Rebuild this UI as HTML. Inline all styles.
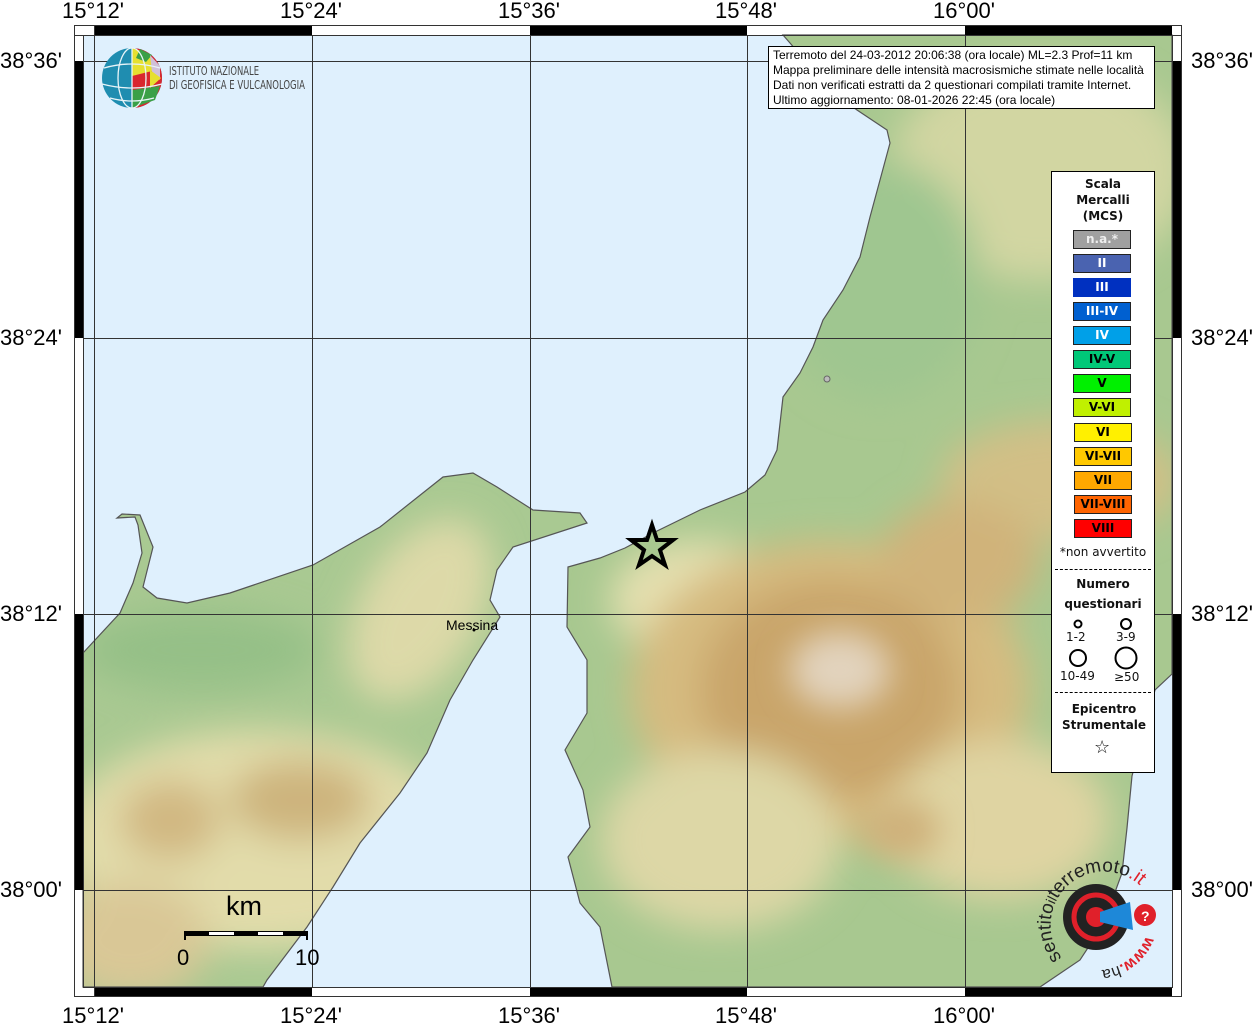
<!DOCTYPE html>
<html><head><meta charset="utf-8"><style>
html,body{margin:0;padding:0;background:#fff;}
body{width:1255px;height:1024px;position:relative;overflow:hidden;font-family:"Liberation Sans","DejaVu Sans",sans-serif;}
.ax{position:absolute;font-size:22px;color:#000;line-height:22px;}
</style></head><body>
<svg width="1255" height="1024" style="position:absolute;left:0;top:0" xmlns="http://www.w3.org/2000/svg">
<defs>
<clipPath id="mapc"><rect x="83" y="35" width="1089" height="952"/></clipPath>
<clipPath id="sic"><path id="sicp" d="M83,653 L120,613 L133,583 L142,553 L138,525 L135,517 L117,518 L122,514 L140,515 L153,547 L143,587 L157,598 L187,603 L230,593 L313,565 L380,527 L443,477 L473,473 L497,487 L533,510 L580,513 L587,523 L513,547 L497,570 L490,600 L500,617 L473,660 L450,700 L427,753 L400,793 L360,843 L333,887 L307,927 L267,980 L263,987 L83,987 Z"/></clipPath>
<clipPath id="cal"><path id="calp" d="M783,35 L790,43 L830,90 L857,110 L887,130 L890,143 L880,180 L870,217 L860,257 L843,290 L823,320 L813,347 L800,373 L783,397 L777,450 L765,475 L745,492 L700,510 L655,532 L625,548 L600,558 L568,567 L567,627 L587,660 L587,713 L565,750 L583,790 L590,827 L568,857 L580,903 L600,927 L612,987 L1040,987 L1080,960 L1103,925 L1122,873 L1127,828 L1132,776 L1155,690 L1172,674 L1172,35 Z"/></clipPath>
<filter id="bl" x="-50%" y="-50%" width="200%" height="200%"><feGaussianBlur stdDeviation="18"/></filter>
<filter id="bl2" x="-50%" y="-50%" width="200%" height="200%"><feGaussianBlur stdDeviation="16"/></filter>
</defs>
<rect x="83" y="35" width="1089" height="952" fill="#dff0fd"/>
<g clip-path="url(#sic)">
<rect x="83" y="460" width="520" height="530" fill="#a9c992"/>
<g filter="url(#bl)">
<ellipse cx="260" cy="840" rx="200" ry="110" fill="#e2dcaa"/>
<ellipse cx="130" cy="940" rx="80" ry="60" fill="#d9c796"/>
<ellipse cx="420" cy="610" rx="60" ry="100" fill="#ddd9a8" transform="rotate(30 420 610)"/>
<ellipse cx="300" cy="800" rx="70" ry="40" fill="#cdb47d"/>
<ellipse cx="170" cy="820" rx="50" ry="40" fill="#d1b882"/>
<ellipse cx="200" cy="650" rx="120" ry="40" fill="#95c087"/>
</g>
</g>
<g clip-path="url(#cal)">
<rect x="560" y="35" width="620" height="960" fill="#a8c890"/>
<g filter="url(#bl)">
<ellipse cx="1040" cy="170" rx="150" ry="110" fill="#d2d6a2"/>
<ellipse cx="1060" cy="480" rx="120" ry="60" fill="#d2bf86"/>
<ellipse cx="700" cy="600" rx="90" ry="60" fill="#e5e0b0"/>
<ellipse cx="830" cy="690" rx="200" ry="150" fill="#d6bb80"/>
<ellipse cx="830" cy="690" rx="130" ry="110" fill="#c9a56a"/>
<ellipse cx="1000" cy="820" rx="110" ry="80" fill="#dfd4a2"/>
<ellipse cx="720" cy="840" rx="120" ry="90" fill="#ddd7a6"/>
<ellipse cx="960" cy="560" rx="80" ry="60" fill="#d0b37a"/>
<ellipse cx="880" cy="280" rx="100" ry="120" fill="#9fc690"/>
</g>
<g filter="url(#bl2)">
<ellipse cx="840" cy="670" rx="50" ry="38" fill="#e2d3bd"/>
<ellipse cx="900" cy="830" rx="40" ry="30" fill="#cfb17a"/>
</g>
</g>
<use href="#sicp" fill="none" stroke="#555" stroke-width="1.2"/>
<use href="#calp" fill="none" stroke="#555" stroke-width="1.2"/>
<circle cx="827" cy="379" r="3" fill="#bbb" stroke="#666"/>
<g stroke="#333" stroke-width="1" clip-path="url(#mapc)">
<line x1="94.5" y1="35" x2="94.5" y2="987"/><line x1="312.5" y1="35" x2="312.5" y2="987"/><line x1="530.5" y1="35" x2="530.5" y2="987"/><line x1="747.5" y1="35" x2="747.5" y2="987"/><line x1="965.5" y1="35" x2="965.5" y2="987"/>
<line x1="74" y1="61.5" x2="1182" y2="61.5"/><line x1="74" y1="338.5" x2="1182" y2="338.5"/><line x1="74" y1="614.5" x2="1182" y2="614.5"/><line x1="74" y1="890.5" x2="1182" y2="890.5"/>
</g>
<rect x="74.5" y="25.5" width="1107" height="971" fill="none" stroke="#333"/>
<rect x="83.5" y="35.5" width="1089" height="952" fill="none" stroke="#333"/>
<g fill="#000">
<rect x="94" y="26" width="218" height="9"/><rect x="530" y="26" width="217" height="9"/><rect x="965" y="26" width="207" height="9"/>
<rect x="94" y="988" width="218" height="8"/><rect x="530" y="988" width="217" height="8"/><rect x="965" y="988" width="207" height="8"/>
<rect x="75" y="61" width="8" height="277"/><rect x="75" y="614" width="8" height="276"/>
<rect x="1173" y="61" width="8" height="277"/><rect x="1173" y="614" width="8" height="276"/>
</g>
<g stroke="#333"><line x1="94.5" y1="26" x2="94.5" y2="35"/><line x1="94.5" y1="987" x2="94.5" y2="996"/><line x1="75" y1="35.5" x2="83" y2="35.5"/><line x1="1172" y1="35.5" x2="1181" y2="35.5"/></g>
<polygon points="652,525 657,540 673,540 660,550 665,565 652,556 639,565 644,550 631,540 647,540" fill="#a8c890" stroke="#000" stroke-width="4" stroke-linejoin="miter"/>
<text x="446" y="630" font-size="14" font-family="Liberation Sans,sans-serif">Messina</text>
<circle cx="474" cy="630" r="1.5" fill="#000"/>
<text x="226" y="915" font-size="27" font-family="Liberation Sans,sans-serif">km</text>
<rect x="184" y="931" width="124" height="5" fill="#000"/>
<rect x="209" y="932" width="25" height="3" fill="#fff"/><rect x="258" y="932" width="25" height="3" fill="#fff"/>
<line x1="185" y1="931" x2="185" y2="940" stroke="#000" stroke-width="2"/><line x1="307" y1="931" x2="307" y2="940" stroke="#000" stroke-width="2"/>
<text x="177" y="965" font-size="22" font-family="Liberation Sans,sans-serif">0</text>
<text x="295" y="965" font-size="22" font-family="Liberation Sans,sans-serif">10</text>
<g>
<circle cx="132" cy="78" r="30" fill="#1f8db0"/>
<path d="M132,48 A30,30 0 0 1 162,78 A30,30 0 0 1 132,108 Z" fill="#d9262e"/>
<path d="M132,48 L150,54 L156,70 L132,76 Z" fill="#e6e030"/>
<path d="M140,49 L152,55 L146,62 L136,58 Z" fill="#3aa047"/>
<path d="M150,55 L160,66 L160,80 L152,72 Z" fill="#d0c0d8"/>
<path d="M132,90 L160,86 L155,100 L132,108 Z" fill="#3aa047"/>
<path d="M150,70 L161,78 L150,88 Z" fill="#e6e030"/>
<g fill="none" stroke="#e8f4f8" stroke-width="1.3"><ellipse cx="132" cy="78" rx="14" ry="30"/><line x1="132" y1="48" x2="132" y2="108"/><path d="M104,68 Q132,60 160,68"/><path d="M102,84 Q132,92 162,84"/><path d="M110,98 Q132,104 154,98"/></g>
</g>
<text x="169" y="75" font-size="12" fill="#444" font-family="DejaVu Sans Condensed,Liberation Sans Narrow,sans-serif" textLength="90" lengthAdjust="spacingAndGlyphs">ISTITUTO NAZIONALE</text>
<text x="169" y="89" font-size="12" fill="#444" font-family="DejaVu Sans Condensed,Liberation Sans Narrow,sans-serif" textLength="136" lengthAdjust="spacingAndGlyphs">DI GEOFISICA E VULCANOLOGIA</text>
<g>
<circle cx="1096" cy="917" r="33" fill="#222"/>
<circle cx="1096" cy="917" r="22" fill="none" stroke="#e0202a" stroke-width="5"/>
<circle cx="1096" cy="917" r="10" fill="#e0202a"/>
<path d="M1100,912 L1130,902 L1133,930 L1100,922 Z" fill="#1e88d8"/>
<circle cx="1145" cy="915" r="11" fill="#e0202a"/>
<text x="1141" y="921" font-size="14" font-weight="bold" fill="#fff">?</text>
<path id="arc1" d="M1062,958 A42,42 0 0 1 1146,892" fill="none"/>
<text font-size="19" font-family="Liberation Sans,sans-serif" fill="#222"><textPath href="#arc1">sentito<tspan font-size="14">il</tspan>terremoto<tspan fill="#e0202a">.it</tspan></textPath></text>
<path id="arc2" d="M1146,936 A52,52 0 0 1 1100,970" fill="none"/>
<text font-size="16" font-family="Liberation Sans,sans-serif" fill="#e0202a" font-weight="bold" transform="rotate(0)"><textPath href="#arc2">www.<tspan fill="#222" font-weight="normal">hai</tspan></textPath></text>
</g>
</svg>
<div class="ax" style="left:62px;top:0">15°12'</div>
<div class="ax" style="left:280px;top:0">15°24'</div>
<div class="ax" style="left:498px;top:0">15°36'</div>
<div class="ax" style="left:715px;top:0">15°48'</div>
<div class="ax" style="left:933px;top:0">16°00'</div>
<div class="ax" style="left:62px;top:1005px">15°12'</div>
<div class="ax" style="left:280px;top:1005px">15°24'</div>
<div class="ax" style="left:498px;top:1005px">15°36'</div>
<div class="ax" style="left:715px;top:1005px">15°48'</div>
<div class="ax" style="left:933px;top:1005px">16°00'</div>
<div class="ax" style="left:0;top:50px">38°36'</div>
<div class="ax" style="left:0;top:327px">38°24'</div>
<div class="ax" style="left:0;top:603px">38°12'</div>
<div class="ax" style="left:0;top:879px">38°00'</div>
<div class="ax" style="left:1191px;top:50px">38°36'</div>
<div class="ax" style="left:1191px;top:327px">38°24'</div>
<div class="ax" style="left:1191px;top:603px">38°12'</div>
<div class="ax" style="left:1191px;top:879px">38°00'</div>
<div style="position:absolute;left:768px;top:46px;background:#fff;border:1px solid #000;font-size:12px;line-height:15px;padding:1px 0 0 4px;box-sizing:border-box;white-space:nowrap;overflow:hidden;width:387px;height:63px">Terremoto del 24-03-2012 20:06:38 (ora locale) ML=2.3 Prof=11 km<br>Mappa preliminare delle intensità macrosismiche stimate nelle località<br>Dati non verificati estratti da 2 questionari compilati tramite Internet.<br>Ultimo aggiornamento: 08-01-2026 22:45 (ora locale)</div>
<div style="position:absolute;left:1051px;top:171px;width:104px;height:602px;background:#fff;border:1px solid #000;box-sizing:border-box;font-family:'DejaVu Sans',sans-serif;color:#111;">
<div style="text-align:center;font-weight:bold;font-size:12px;line-height:16px;margin-top:4px">Scala<br>Mercalli<br>(MCS)</div>
<div style="position:absolute;left:0;top:58px;width:102px;font-weight:bold;font-size:12px;">
<div style="position:absolute;left:21px;top:0;width:56px;height:17px;border:1px solid #222;background:#a0a0a0;color:#eee;text-align:center;line-height:17px">n.a.*</div>
<div style="position:absolute;left:21px;top:24px;width:56px;height:17px;border:1px solid #222;background:#4a63b0;color:#fff;text-align:center;line-height:17px">II</div>
<div style="position:absolute;left:21px;top:48px;width:56px;height:17px;border:1px solid #0030c0;background:#0030c0;color:#fff;text-align:center;line-height:17px">III</div>
<div style="position:absolute;left:21px;top:72px;width:56px;height:17px;border:1px solid #222;background:#0060d0;color:#fff;text-align:center;line-height:17px">III-IV</div>
<div style="position:absolute;left:21px;top:96px;width:56px;height:17px;border:1px solid #222;background:#00a0e8;color:#fff;text-align:center;line-height:17px">IV</div>
<div style="position:absolute;left:21px;top:120px;width:56px;height:17px;border:1px solid #222;background:#00c878;color:#000;text-align:center;line-height:17px">IV-V</div>
<div style="position:absolute;left:21px;top:144px;width:56px;height:17px;border:1px solid #222;background:#00f000;color:#000;text-align:center;line-height:17px">V</div>
<div style="position:absolute;left:21px;top:168px;width:56px;height:17px;border:1px solid #222;background:#c0f000;color:#000;text-align:center;line-height:17px">V-VI</div>
<div style="position:absolute;left:22px;top:193px;width:56px;height:17px;border:1px solid #222;background:#fff000;color:#000;text-align:center;line-height:17px">VI</div>
<div style="position:absolute;left:22px;top:217px;width:56px;height:17px;border:1px solid #222;background:#ffc800;color:#000;text-align:center;line-height:17px">VI-VII</div>
<div style="position:absolute;left:22px;top:241px;width:56px;height:17px;border:1px solid #222;background:#ffa800;color:#000;text-align:center;line-height:17px">VII</div>
<div style="position:absolute;left:22px;top:265px;width:56px;height:17px;border:1px solid #222;background:#ff6400;color:#000;text-align:center;line-height:17px">VII-VIII</div>
<div style="position:absolute;left:22px;top:289px;width:56px;height:17px;border:1px solid #222;background:#ff0000;color:#000;text-align:center;line-height:17px">VIII</div>
</div>
<div style="position:absolute;left:0;top:373px;width:102px;text-align:center;font-size:12px">*non avvertito</div>
<div style="position:absolute;left:3px;top:397px;width:96px;border-top:1px dashed #000"></div>
<div style="position:absolute;left:0;top:402px;width:102px;text-align:center;font-weight:bold;font-size:12px;line-height:20px">Numero<br>questionari</div>
<svg style="position:absolute;left:0;top:440px" width="102" height="70"><g fill="none" stroke="#000" stroke-width="2"><circle cx="26" cy="12" r="3.5"/><circle cx="74" cy="12" r="5"/><circle cx="26" cy="46" r="8"/><circle cx="74" cy="46" r="10.5"/></g></svg>
<div style="position:absolute;left:14px;top:458px;font-size:12px">1-2</div>
<div style="position:absolute;left:64px;top:458px;font-size:12px">3-9</div>
<div style="position:absolute;left:8px;top:497px;font-size:12px">10-49</div>
<div style="position:absolute;left:62px;top:498px;font-size:12px">≥50</div>
<div style="position:absolute;left:3px;top:520px;width:96px;border-top:1px dashed #000"></div>
<div style="position:absolute;left:0;top:529px;width:104px;text-align:center;font-weight:bold;font-size:12px;line-height:16px">Epicentro<br>Strumentale</div>
<div style="position:absolute;left:42px;top:566px;font-size:18px;line-height:20px">☆</div>
</div>
</body></html>
